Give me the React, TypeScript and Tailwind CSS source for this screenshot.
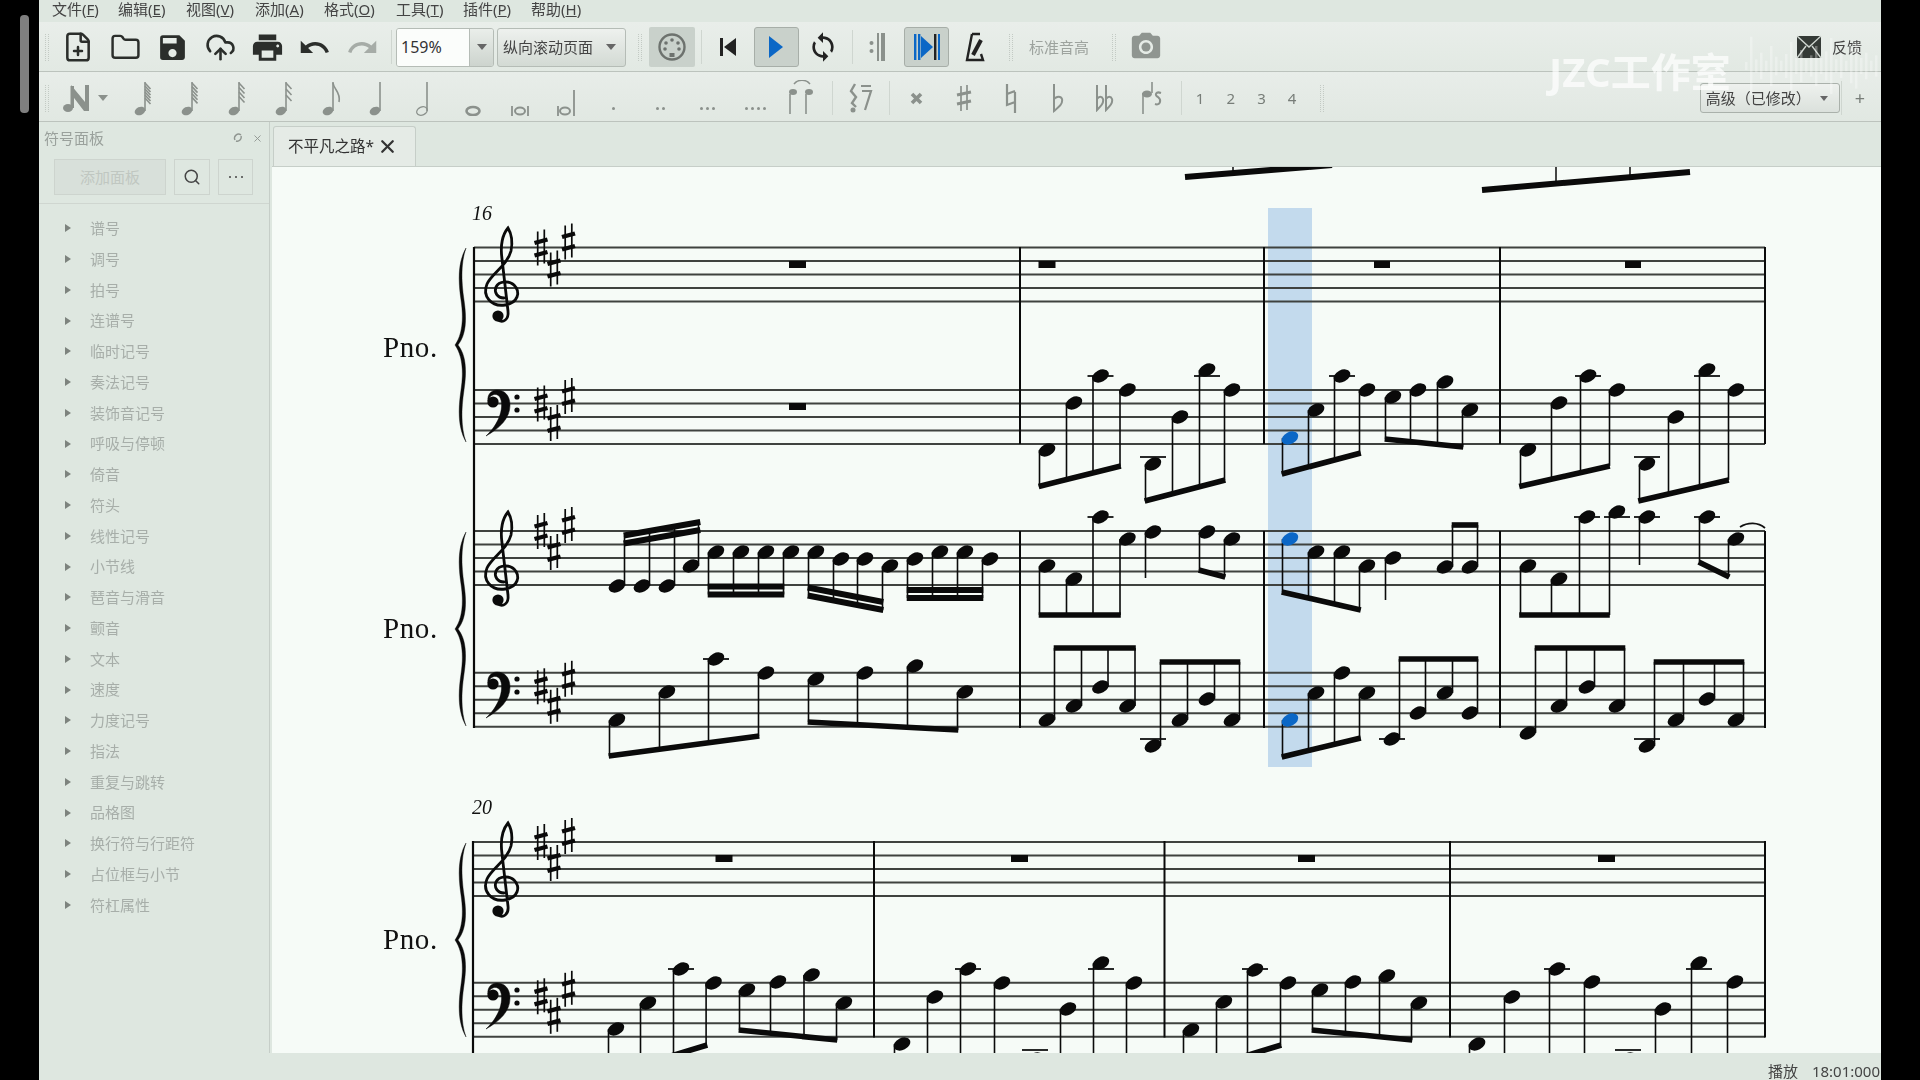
import { Fragment } from "react";
import type { ReactNode } from "react";
import { FilePlus, Folder, CloudUpload, Search, X } from "lucide-react";
import { MdSave, MdPrint, MdUndo, MdRedo, MdSync, MdPhotoCamera } from "react-icons/md";

type Head = [number, number, boolean?];
type Group = { h: Head[]; d: "u" | "d"; b: [number, number, number, number]; b2?: number };

const BLUE = "#0b67c6";
const Nh = ({ x, y, c }: { x: number; y: number; c?: boolean }) => (
  <ellipse cx={x} cy={y} rx={8.8} ry={6} transform={`rotate(-27 ${x} ${y})`} fill={c ? BLUE : "#0a0a0a"} />
);

const groups: Group[] = [
  // system 1, staff 2
  { h: [[1047, 450], [1074, 403], [1100.5, 376], [1127.5, 390]], d: "d", b: [1039.5, 486.5, 1120, 466] },
  { h: [[1153, 464], [1180, 417], [1207, 370], [1232, 390]], d: "d", b: [1145.5, 501, 1224.5, 480] },
  { h: [[1290, 438, true], [1316, 410], [1342, 376], [1367, 390]], d: "d", b: [1282.5, 474, 1360, 453] },
  { h: [[1393, 397], [1418, 390], [1445, 382], [1470, 410]], d: "d", b: [1385.5, 439, 1462.5, 447] },
  { h: [[1528, 450], [1559, 403], [1588, 376], [1617, 390]], d: "d", b: [1520, 486.5, 1609, 466] },
  { h: [[1647, 464], [1676, 417], [1707, 370], [1736, 390]], d: "d", b: [1639, 501, 1728, 480] },
  // system 1b, staff 1, measure 1
  { h: [[617, 586], [642, 586], [667, 586], [691, 566]], d: "u", b: [624.5, 535.5, 699.5, 522], b2: 8 },
  { h: [[716, 552], [741, 552], [766, 552], [791, 552]], d: "d", b: [708.5, 594.5, 783.5, 594.5], b2: -8 },
  { h: [[816, 552], [841, 559], [865, 559], [890, 566]], d: "d", b: [808.5, 595.5, 882.5, 610], b2: -8 },
  { h: [[915, 559], [940, 552], [965, 552], [990, 559]], d: "d", b: [907.5, 598, 982.5, 598], b2: -8 },
  // measure 2
  { h: [[1047, 566], [1074, 579], [1100.5, 517], [1127.5, 539]], d: "d", b: [1039.5, 615, 1120, 615] },
  { h: [[1207, 532], [1232, 539]], d: "d", b: [1199.5, 570, 1224.5, 577] },
  { h: [[1290, 539, true], [1316, 552], [1342, 552], [1367, 566]], d: "d", b: [1282.5, 592, 1360, 610] },
  { h: [[1445, 567], [1470, 567]], d: "u", b: [1452.5, 525, 1477.5, 525] },
  { h: [[1528, 566], [1559, 579], [1587, 517], [1617, 512]], d: "d", b: [1520, 615, 1609, 615] },
  { h: [[1707, 517], [1736, 539]], d: "d", b: [1699.5, 562, 1728.5, 577] },
  // staff 2, lower
  { h: [[617, 720], [667, 692], [716, 659], [766, 673]], d: "d", b: [609.5, 756, 758.5, 736] },
  { h: [[816, 679], [865, 673], [915, 666], [965, 692]], d: "d", b: [808.5, 722, 957.5, 730] },
  { h: [[1047, 720], [1074, 706], [1100.5, 687], [1127.5, 706]], d: "u", b: [1054.5, 648, 1135, 648] },
  { h: [[1153, 746], [1180, 720], [1207, 699], [1232, 720]], d: "u", b: [1160.5, 662, 1239.5, 662] },
  { h: [[1290, 720, true], [1316, 693], [1342, 673], [1367, 693]], d: "d", b: [1282.5, 757, 1360, 738] },
  { h: [[1392, 739], [1418, 713], [1445, 693], [1470, 713]], d: "u", b: [1399.5, 659, 1477.5, 659] },
  { h: [[1528, 733], [1559, 706], [1587, 687], [1617, 706]], d: "u", b: [1535.5, 648, 1624.5, 648] },
  { h: [[1647, 746], [1676, 720], [1707, 699], [1736, 720]], d: "u", b: [1654.5, 662, 1743.5, 662] },
  // system 2
  { h: [[616, 1029], [648, 1003], [681, 969], [713.6, 983]], d: "d", b: [609, 1075, 706.5, 1045] },
  { h: [[747, 990], [778, 982], [811.5, 975], [844, 1003]], d: "d", b: [739.5, 1030, 836.5, 1040] },
  { h: [[902, 1044], [935, 997], [968, 969], [1002, 983]], d: "d", b: [894.5, 1095, 994.5, 1075] },
  { h: [[1068, 1009], [1101, 963], [1134, 983]], d: "d", b: [1060.5, 1095, 1126.5, 1085] },
  { h: [[1191, 1030], [1224, 1002], [1255, 970], [1288, 983]], d: "d", b: [1183.5, 1075, 1280.5, 1045] },
  { h: [[1320, 990], [1353, 982], [1387, 976], [1419, 1003]], d: "d", b: [1312.5, 1030, 1411.5, 1040] },
  { h: [[1477, 1044], [1512, 997], [1557, 969], [1592, 982]], d: "d", b: [1469.5, 1095, 1584.5, 1075] },
  { h: [[1663, 1009], [1699, 963], [1735, 982]], d: "d", b: [1655.5, 1095, 1727.5, 1085] },
];

const singles: [number, number, number, "d" | "u"][] = [
  [1153, 532, 578, "d"],
  [1393, 558, 600, "d"],
  [1647, 517, 565, "d"],
  [1035, 1059, 1090, "d"],
  [1628, 1059, 1090, "d"],
];

const ledgers: [number, number][] = [
  [1100.5, 376], [1207, 376], [1153, 457], [1342, 376], [1588, 376], [1707, 376], [1647, 457],
  [1100.5, 517], [1587, 517], [1617, 517], [1647, 517], [1707, 517],
  [1153, 739], [1392, 739], [1647, 739], [716, 659],
  [681, 969], [968, 969], [1101, 969], [1255, 969], [1557, 969], [1699, 969], [1035, 1050], [1628, 1050],
];

const rests: [number, number, number][] = [
  [789, 261, 17], [789, 403, 17], [1038.5, 261, 17], [1374, 261, 16], [1625, 261, 16],
  [715.5, 855, 17], [1011, 855, 17], [1298, 855, 17], [1598, 855, 17],
];

const Staff = ({ x1, x2, y }: { x1: number; x2: number; y: number }) => (
  <g stroke="#3f423f" strokeWidth={2}>
    {[0, 1, 2, 3, 4].map((i) => (
      <line key={i} x1={x1} x2={x2} y1={y + i * 13.5} y2={y + i * 13.5} />
    ))}
  </g>
);

const Treble = ({ x, y }: { x: number; y: number }) => (
  <g transform={`translate(${x} ${y})`}>
    <path
      d="M19 51 C12 51 9 45 11 40 C14 34 24 33 29 38 C36 45 33 56 20 58 C6 60 -3 49 2 37 C7 26 22 19 26 4 C28 -6 26 -14 23 -19 C18 -13 15 -3 17 12 L23 64 C24 73 18 76 13 73"
      fill="none"
      stroke="#0a0a0a"
      strokeWidth={2.8}
      strokeLinecap="round"
    />
    <circle cx={13} cy={69} r={5.6} fill="#0a0a0a" />
  </g>
);

const Bass = ({ x, y }: { x: number; y: number }) => (
  <g transform={`translate(${x} ${y})`}>
    <path
      d="M0 44 C14 36 24 26 24 13 C24 3 18 -2 11 -2 C5 -2 1 3 2 9 C4 2 10 1 13 4 C18 10 17 28 0 44 Z"
      fill="#0a0a0a"
      stroke="#0a0a0a"
      strokeWidth={0.5}
    />
    <circle cx={7} cy={10} r={5.6} fill="#0a0a0a" />
    <circle cx={31} cy={5} r={2.6} fill="#0a0a0a" />
    <circle cx={31} cy={18} r={2.6} fill="#0a0a0a" />
  </g>
);

const Sharp = ({ x, y }: { x: number; y: number }) => (
  <g transform={`translate(${x} ${y})`}>
    <line x1={-3.3} x2={-3.3} y1={-16} y2={18} stroke="#0a0a0a" strokeWidth={1.7} />
    <line x1={3.3} x2={3.3} y1={-18} y2={16} stroke="#0a0a0a" strokeWidth={1.7} />
    <line x1={-6.5} x2={6.5} y1={-4.5} y2={-8} stroke="#0a0a0a" strokeWidth={4.4} />
    <line x1={-6.5} x2={6.5} y1={8} y2={4.5} stroke="#0a0a0a" strokeWidth={4.4} />
  </g>
);

const Brace = ({ y }: { y: number }) => (
  <path
    transform={`translate(0 ${y - 248})`}
    d="M466 248 C458 262 458 280 461 300 C464 320 462 335 455 345 C462 355 464 370 461 390 C458 410 458 428 466 442 C461 428 461 410 464 390 C467 370 466 355 458 345 C466 335 467 320 464 300 C461 280 461 262 466 248 Z"
    fill="#0a0a0a"
    stroke="#0a0a0a"
    strokeWidth={0.4}
  />
);

const Key = ({ x, y, bass }: { x: number; y: number; bass?: boolean }) =>
  bass ? (
    <>
      <Sharp x={x} y={y + 13.5} />
      <Sharp x={x + 13} y={y + 33} />
      <Sharp x={x + 27.5} y={y + 6} />
    </>
  ) : (
    <>
      <Sharp x={x} y={y} />
      <Sharp x={x + 13} y={y + 21} />
      <Sharp x={x + 27.5} y={y - 6} />
    </>
  );

const Pno = ({ y }: { y: number }) => (
  <text x={383} y={y} fontSize={29} letterSpacing={0.6} className="font-['Liberation_Serif',serif]" fill="#111">Pno.</text>
);

function Score() {
  return (
    <svg viewBox="272 167 1609 886" width={1609} height={886} className="block">
      <rect x={1268} y={208} width={44} height={559} fill="#c3daed" />
      {/* beams running in from the system above */}
      <g stroke="#0a0a0a">
        <line x1={1185} y1={177} x2={1332} y2={165} strokeWidth={6} />
        <line x1={1482} y1={190} x2={1690} y2={172} strokeWidth={6} />
        {[1233, 1281, 1556, 1630].map((x) => (
          <line key={x} x1={x} x2={x} y1={165} y2={x < 1400 ? 172 : x < 1600 ? 183 : 176} strokeWidth={1.5} />
        ))}
      </g>
      {[247.5, 390, 531, 672.8].map((y) => (
        <Staff key={y} x1={474} x2={1765} y={y} />
      ))}
      {[842, 982.8].map((y) => (
        <Staff key={y} x1={473} x2={1765} y={y} />
      ))}
      <line x1={474} x2={474} y1={247} y2={728} stroke="#0a0a0a" strokeWidth={2.2} />
      <line x1={473} x2={473} y1={841} y2={1060} stroke="#0a0a0a" strokeWidth={2.2} />
      {[1020, 1264, 1500, 1765].flatMap((x) =>
        [
          [247, 444],
          [531, 728],
        ].map(([a, b]) => <line key={`${x}${a}`} x1={x} x2={x} y1={a} y2={b} stroke="#0a0a0a" strokeWidth={2} />),
      )}
      {[874, 1164.5, 1450, 1765].map((x) => (
        <line key={x} x1={x} x2={x} y1={841} y2={1037.5} stroke="#0a0a0a" strokeWidth={2} />
      ))}
      <Brace y={248} />
      <Brace y={532} />
      <Brace y={843} />
      <Pno y={357} />
      <Pno y={638} />
      <Pno y={949} />
      <text x={472} y={220} fontSize={20} fontStyle="italic" className="font-['Liberation_Serif',serif]" fill="#111">16</text>
      <text x={472} y={814} fontSize={20} fontStyle="italic" className="font-['Liberation_Serif',serif]" fill="#111">20</text>
      <Treble x={485} y={247} />
      <Treble x={485} y={531} />
      <Treble x={485} y={842} />
      <Bass x={486} y={392} />
      <Bass x={486} y={674} />
      <Bass x={486} y={985} />
      <Key x={541} y={247.5} />
      <Key x={541} y={531} />
      <Key x={541} y={842} />
      <Key x={541} y={390} bass />
      <Key x={541} y={672.8} bass />
      <Key x={541} y={982.8} bass />
      {rests.map(([x, y, w]) => (
        <rect key={`${x}${y}`} x={x} y={y} width={w} height={7} fill="#0a0a0a" />
      ))}
      {ledgers.map(([x, y]) => (
        <line key={`${x}${y}`} x1={x - 13} x2={x + 13} y1={y} y2={y} stroke="#111" strokeWidth={1.8} />
      ))}
      {groups.map((g, i) => {
        const [x1, y1, x2, y2] = g.b;
        return (
          <Fragment key={i}>
            {g.h.map(([x, y, c], j) => {
              const sx = g.d === "d" ? x - 7.5 : x + 7.5;
              const sy = y1 + ((sx - x1) / (x2 - x1)) * (y2 - y1);
              return (
                <Fragment key={j}>
                  <line x1={sx} x2={sx} y1={y} y2={sy} stroke="#0a0a0a" strokeWidth={1.6} />
                  <Nh x={x} y={y} c={c} />
                </Fragment>
              );
            })}
            <line x1={x1 - 0.8} x2={x2 + 0.8} y1={y1} y2={y2} stroke="#0a0a0a" strokeWidth={g.b2 ? 6 : 5.6} />
            {g.b2 ? <line x1={x1 - 0.8} x2={x2 + 0.8} y1={y1 + g.b2} y2={y2 + g.b2} stroke="#0a0a0a" strokeWidth={6} /> : null}
          </Fragment>
        );
      })}
      {singles.map(([x, y, e, d]) => (
        <Fragment key={`${x}${y}`}>
          <line x1={d === "d" ? x - 7.5 : x + 7.5} x2={d === "d" ? x - 7.5 : x + 7.5} y1={y} y2={e} stroke="#0a0a0a" strokeWidth={1.6} />
          <Nh x={x} y={y} />
        </Fragment>
      ))}
      <path d="M1740 527 C1748 522 1758 522 1765 528" fill="none" stroke="#111" strokeWidth={1.8} />
    </svg>
  );
}

const G = "#8b918c";
const Box = ({ children, w = 26, h = 36 }: { children: ReactNode; w?: number; h?: number }) => (
  <svg width={w} height={h} viewBox={`0 0 ${w} ${h}`} fill="none">{children}</svg>
);

const NoteIcon = ({ flags, hollow, noStem }: { flags: number; hollow?: boolean; noStem?: boolean }) => (
  <Box>
    <ellipse cx={10} cy={31} rx={5.5} ry={4} transform="rotate(-25 10 31)" fill={hollow ? "none" : G} stroke={G} strokeWidth={hollow ? 1.3 : 0} />
    {!noStem && <line x1={15} x2={15} y1={31} y2={2} stroke={G} strokeWidth={1.6} />}
    {flags === 1 && <path d="M15 3 C16 10 23 12 21 22" stroke={G} strokeWidth={1.6} />}
    {flags > 1 && Array.from({ length: flags + 1 }).map((_, i) => (
      <line key={i} x1={15} y1={3 + i * (18 / (flags + 1))} x2={20.5} y2={9 + i * (18 / (flags + 1))} stroke={G} strokeWidth={1.6} />
    ))}
  </Box>
);

const Grip = ({ className }: { className: string }) => (
  <div className={`w-[4px] h-[27px] border-x border-dotted border-[#c3cac4] shrink-0 ${className}`} />
);
const Sep = ({ className }: { className: string }) => <div className={`w-px h-[34px] bg-[#cfd6d0] shrink-0 ${className}`} />;
const Cell = ({ children, className = "w-[47.4px]" }: { children: ReactNode; className?: string }) => (
  <div className={`flex items-center justify-center shrink-0 h-full ${className}`}>{children}</div>
);

const Dots = ({ n }: { n: number }) => (
  <div className="flex gap-[3px] self-end mb-[11px]">
    {Array.from({ length: n }).map((_, i) => (
      <div key={i} className="w-[3px] h-[3px] rounded-full bg-[#8b918c]" />
    ))}
  </div>
);

const menus: [string, string, string][] = [
  ["文件", "F", "w-[66px]"],
  ["编辑", "E", "w-[68px]"],
  ["视图", "V", "w-[69px]"],
  ["添加", "A", "w-[69px]"],
  ["格式", "O", "w-[72px]"],
  ["工具", "T", "w-[67px]"],
  ["插件", "P", "w-[68px]"],
  ["帮助", "H", "w-[70px]"],
];

const palettes = [
  "谱号", "调号", "拍号", "连谱号", "临时记号", "奏法记号", "装饰音记号", "呼吸与停顿", "倚音", "符头", "线性记号", "小节线",
  "琶音与滑音", "颤音", "文本", "速度", "力度记号", "指法", "重复与跳转", "品格图", "换行符与行距符", "占位框与小节", "符杠属性",
];

const wave = [6, 44, 10, 20, 8, 30, 14, 8, 18, 36, 12, 24, 10, 16, 30, 12, 22, 42, 10, 18, 8, 26, 34, 12, 20, 8, 16];

function Toolbar1() {
  return (
    <div className="h-[50px] pt-[1px] flex items-center border-b border-[#bcc3bd] bg-linear-to-b from-[#e9eeea] to-[#e2e9e3] shrink-0">
      <Grip className="ml-[6px]" />
      <div className="ml-[5.3px] flex h-full text-[#2b2e2b]">
        <Cell><FilePlus size={32} strokeWidth={1.9} /></Cell>
        <Cell><Folder size={31} strokeWidth={1.9} /></Cell>
        <Cell><MdSave size={33} /></Cell>
        <Cell><CloudUpload size={31} strokeWidth={2} /></Cell>
        <Cell><MdPrint size={35} /></Cell>
        <Cell><MdUndo size={33} /></Cell>
        <Cell><MdRedo size={33} className="text-[#a6aca7]" /></Cell>
      </div>
      <Sep className="ml-[5px]" />
      <div className="ml-[4px] w-[98px] h-[39px] flex rounded-[3px] border border-[#b5bcb6] overflow-hidden">
        <div className="w-[72px] bg-[#fbfdfb] flex items-center pl-[4px] text-[16px] text-[#333]">159%</div>
        <div className="flex-1 border-l border-[#b5bcb6] flex items-center justify-center bg-linear-to-b from-[#eaeeea] to-[#cdd4ce]">
          <div className="border-x-[5px] border-x-transparent border-t-[6px] border-t-[#666]" />
        </div>
      </div>
      <div className="ml-[3px] w-[129px] h-[39px] flex items-center justify-between pl-[5px] pr-[9px] rounded-[3px] border border-[#b5bcb6] bg-linear-to-b from-[#eef1ee] to-[#d3dad4] text-[15px] text-[#444]">
        <span>纵向滚动页面</span>
        <div className="border-x-[5px] border-x-transparent border-t-[6px] border-t-[#666]" />
      </div>
      <Grip className="ml-[12px]" />
      <div className="ml-[7px] w-[46px] h-[40px] rounded-[2px] bg-[#c9d1cb] flex items-center justify-center">
        <svg width="30" height="30" viewBox="0 0 30 30" fill="none">
          <circle cx="15" cy="15" r="12.5" stroke="#6d726e" strokeWidth="2.4" />
          <circle cx="15" cy="8" r="1.8" fill="#6d726e" />
          <circle cx="9" cy="11" r="1.8" fill="#6d726e" />
          <circle cx="21" cy="11" r="1.8" fill="#6d726e" />
          <circle cx="8" cy="17" r="1.8" fill="#6d726e" />
          <circle cx="22" cy="17" r="1.8" fill="#6d726e" />
          <rect x="12.5" y="21" width="5" height="4" fill="#6d726e" />
        </svg>
      </div>
      <Sep className="ml-[5.5px]" />
      <Cell className="ml-[2px] w-[49px]">
        <svg width="18" height="20" viewBox="0 0 18 20"><rect x="1" y="1" width="3" height="18" fill="#222" /><path d="M17 1 V19 L5 10 Z" fill="#222" /></svg>
      </Cell>
      <div className="ml-[1px] w-[45px] h-[40px] rounded-[3px] border border-[#a7aea8] bg-[#c9d1cb] flex items-center justify-center">
        <svg width="16" height="24" viewBox="0 0 16 24"><path d="M1 1 L15 12 L1 23 Z" fill="#0b67c6" /></svg>
      </div>
      <Cell className="w-[49px]"><MdSync size={32} className="text-[#222]" /></Cell>
      <Sep className="ml-[4px]" />
      <Cell className="w-[51px]">
        <svg width="18" height="28" viewBox="0 0 18 28"><circle cx="2.5" cy="10" r="2" fill="#8b918c" /><circle cx="2.5" cy="18" r="2" fill="#8b918c" /><rect x="8" y="0" width="2" height="28" fill="#8b918c" /><rect x="12" y="0" width="4" height="28" fill="#8b918c" /></svg>
      </Cell>
      <div className="ml-[0.5px] w-[45px] h-[40px] rounded-[3px] border border-[#a7aea8] bg-[#c9d1cb] flex items-center justify-center">
        <svg width="26" height="30" viewBox="0 0 26 30"><rect x="0" y="2" width="2.4" height="26" fill="#0b67c6" /><rect x="4" y="2" width="2.4" height="26" fill="#0b67c6" /><path d="M7 4 L19 15 L7 26 Z" fill="#0b67c6" /><rect x="20" y="2" width="2.4" height="26" fill="#222" /><rect x="24" y="2" width="2" height="26" fill="#0b67c6" /></svg>
      </div>
      <Cell className="w-[52px]">
        <svg width="20" height="30" viewBox="0 0 20 30" fill="none"><path d="M7 2 H15 M7 2 L2 28 H18 L16 22" stroke="#222" strokeWidth="2.4" /><path d="M8 23 L16 8" stroke="#222" strokeWidth="4" /></svg>
      </Cell>
      <Grip className="ml-[8px]" />
      <div className="ml-[16px] w-[62px] text-[15px] text-[#9da39e] whitespace-nowrap">标准音高</div>
      <Grip className="ml-[21px]" />
      <Cell className="w-[60px]"><MdPhotoCamera size={34} className="text-[#8f9590]" /></Cell>
      <div className="flex-1" />
      <svg width="26" height="24" viewBox="0 0 26 24" className="mr-[10px]">
        <rect x="1" y="1" width="24" height="22" fill="#343a36" />
        <path d="M1 1 L13 12 L25 1 M1 23 L10 11 M25 23 L16 11" stroke="#cfd6d0" strokeWidth="1.4" fill="none" />
      </svg>
      <span className="text-[15px] text-[#444] mr-[19px]">反馈</span>
    </div>
  );
}

function Toolbar2() {
  return (
    <div className="h-[50px] pt-[3px] flex items-center border-b border-[#bcc3bd] bg-linear-to-b from-[#e8ede9] to-[#e1e8e2] text-[#8b918c] shrink-0">
      <Grip className="ml-[6px]" />
      <div className="ml-[5.3px] w-[65px] flex items-center h-full pl-[9px] gap-[9px]">
        <svg width="26" height="30" viewBox="0 0 26 30"><ellipse cx="5" cy="25" rx="5" ry="4" fill="#8b918c" /><rect x="7.5" y="3" width="3.5" height="22" fill="#8b918c" /><path d="M8 2 L22 19 V2 H26 V28 H21 L8 11 Z" fill="#8b918c" /></svg>
        <div className="border-x-[5.5px] border-x-transparent border-t-[6px] border-t-[#8b918c]" />
      </div>
      <div className="flex h-full">
        {[5, 4, 3, 2, 1, 0].map((f) => (
          <Cell key={f} className="w-[47.1px]"><NoteIcon flags={f} /></Cell>
        ))}
        <Cell className="w-[47.1px]"><NoteIcon flags={0} hollow /></Cell>
        <Cell className="w-[47.1px]">
          <svg width="20" height="36" viewBox="0 0 20 36"><ellipse cx="10" cy="31" rx="6.5" ry="4" stroke="#8b918c" strokeWidth="2.6" fill="none" /></svg>
        </Cell>
        <Cell className="w-[47.1px]">
          <svg width="22" height="36" viewBox="0 0 22 36" fill="none"><ellipse cx="11" cy="31" rx="5" ry="3.5" stroke="#8b918c" strokeWidth="2" /><path d="M3 26 V36 M19 26 V36" stroke="#8b918c" strokeWidth="1.8" /></svg>
        </Cell>
        <Cell className="w-[47.1px]">
          <svg width="22" height="36" viewBox="0 0 22 36" fill="none"><ellipse cx="9" cy="31" rx="5" ry="3.5" stroke="#8b918c" strokeWidth="2" /><path d="M2 26 V36 M18 10 V36" stroke="#8b918c" strokeWidth="1.8" /></svg>
        </Cell>
        <Cell className="w-[47.1px]"><Dots n={1} /></Cell>
        <Cell className="w-[47.1px]"><Dots n={2} /></Cell>
        <Cell className="w-[47.1px]"><Dots n={3} /></Cell>
        <Cell className="w-[47.1px]"><Dots n={4} /></Cell>
        <Cell className="w-[47.1px]">
          <svg width="30" height="36" viewBox="0 0 30 36" fill="none">
            <path d="M7 4 C11 -1 19 -1 23 4" stroke="#8b918c" strokeWidth="1.5" />
            <path d="M3 34 V14 M19 34 V14" stroke="#8b918c" strokeWidth="1.6" />
            <ellipse cx="6" cy="12" rx="4" ry="3" fill="#8b918c" /><ellipse cx="22" cy="12" rx="4" ry="3" fill="#8b918c" />
          </svg>
        </Cell>
      </div>
      <Sep className="ml-[6px]" />
      <Cell className="w-[56px]">
        <svg width="24" height="32" viewBox="0 0 24 32" fill="none"><path d="M6 2 L2 9 L7 15 L3 21 L7 25" stroke="#8b918c" strokeWidth="2.4" /><path d="M12 4 H22 M13 9 H22 L16 28" stroke="#8b918c" strokeWidth="2.2" /><circle cx="4" cy="28" r="2.5" fill="#8b918c" /></svg>
      </Cell>
      <Sep className="" />
      <Cell className="ml-[3.5px] w-[47px]">
        <svg width="13" height="13" viewBox="0 0 13 13"><path d="M2 2 L11 11 M11 2 L2 11" stroke="#8b918c" strokeWidth="3.6" /></svg>
      </Cell>
      <Cell className="w-[47px]">
        <svg width="16" height="28" viewBox="0 0 16 28"><path d="M5 2 V27 M11 1 V26" stroke="#8b918c" strokeWidth="1.7" /><path d="M1 11 L15 8 M1 20 L15 17" stroke="#8b918c" strokeWidth="3" /></svg>
      </Cell>
      <Cell className="w-[47px]">
        <svg width="12" height="30" viewBox="0 0 12 30" fill="none"><path d="M2 1 V22 L10 19 M10 9 V30 M2 11 L10 8" stroke="#8b918c" strokeWidth="2.2" /></svg>
      </Cell>
      <Cell className="w-[47px]">
        <svg width="14" height="30" viewBox="0 0 14 30" fill="none"><path d="M3 1 V28 C8 24 12 21 11 16 C10 13 6 13 3 16" stroke="#8b918c" strokeWidth="2" /></svg>
      </Cell>
      <Cell className="w-[47px]">
        <svg width="20" height="28" viewBox="0 0 20 28" fill="none"><path d="M2 1 V26 C6 22 9 19 8 15 C7 12 4 12 2 15 M11 1 V26 C15 22 18 19 17 15 C16 12 13 12 11 15" stroke="#8b918c" strokeWidth="2" /></svg>
      </Cell>
      <Cell className="w-[47px]">
        <svg width="22" height="34" viewBox="0 0 22 34" fill="none"><path d="M2 33 V12 M11 1 V12" stroke="#8b918c" strokeWidth="1.6" /><ellipse cx="6" cy="13" rx="5" ry="3.5" fill="#8b918c" /><path d="M20 12 C15 10 13 14 17 16 C21 19 19 25 14 23" stroke="#8b918c" strokeWidth="2" /></svg>
      </Cell>
      <Sep className="ml-[6px]" />
      <div className="ml-[2.5px] flex h-full text-[15px] text-[#777d78]">
        {["1", "2", "3", "4"].map((n) => (
          <Cell key={n} className="w-[30.7px]">{n}</Cell>
        ))}
      </div>
      <Grip className="ml-[13px]" />
      <div className="flex-1" />
      <div className="w-[140px] h-[30px] flex items-center justify-between pl-[5px] pr-[11px] rounded-[3px] border border-[#aab1ab] bg-linear-to-b from-[#eef1ee] to-[#dbe1dc] text-[15px] text-[#444]">
        <span className="whitespace-nowrap">高级（已修改）</span>
        <div className="border-x-[4px] border-x-transparent border-t-[5px] border-t-[#666]" />
      </div>
      <Sep className="ml-[1px] h-[26px]" />
      <span className="ml-[13px] mr-[16px] text-[18px] text-[#777d78] leading-none">+</span>
    </div>
  );
}

export default function App() {
  return (
    <div className="relative w-[1920px] h-[1080px] bg-black overflow-hidden flex font-['Noto_Sans','Noto_Sans_CJK_SC',sans-serif]">
      <div className="w-[39px] shrink-0 pt-[15px] pl-[20px]">
        <div className="w-[9px] h-[98px] rounded-[4px] bg-[#7f7f7f]" />
      </div>
      <div className="w-[1842px] shrink-0 flex flex-col bg-[#dee7e0] blur-[0.5px]">
        <div className="h-[22px] pb-[4px] shrink-0 flex items-center pl-[13px] text-[15px] text-[#444] leading-none">
          {menus.map(([t, k, w]) => (
            <div key={k} className={`${w} whitespace-nowrap`}>
              {t}(<span className="underline">{k}</span>)
            </div>
          ))}
        </div>
        <Toolbar1 />
        <Toolbar2 />
        <div className="flex-1 flex min-h-0">
          <div className="w-[231px] shrink-0 border-r border-[#c6cec8] flex flex-col">
            <div className="h-[37px] pb-[5px] shrink-0 flex items-center pl-[5px] pr-[6px] text-[15px] text-[#9aa19c]">
              <span className="flex-1">符号面板</span>
              <svg width="10" height="10" viewBox="0 0 10 10" fill="none" className="mr-[9px]"><path d="M2 7 A4 4 0 0 1 8 2 M8 3 A4 4 0 0 1 3 8" stroke="#8f9590" strokeWidth="1.4" /></svg>
              <X size={11} strokeWidth={2} className="text-[#8f9590]" />
            </div>
            <div className="flex items-center h-[36px] shrink-0 pl-[15px] gap-[8px]">
              <div className="w-[112px] h-full border border-[#cdd4ce] bg-[#d8e0da] flex items-center justify-center text-[15px] text-[#c0c7c1]">添加面板</div>
              <div className="w-[36px] h-full border border-[#cdd4ce] flex items-center justify-center text-[#444]"><Search size={18} strokeWidth={2} /></div>
              <div className="w-[35px] h-full border border-[#cdd4ce] flex items-center justify-center gap-[4px]">
                <i className="w-[2px] h-[2px] rounded-full bg-[#444]" /><i className="w-[2px] h-[2px] rounded-full bg-[#444]" /><i className="w-[2px] h-[2px] rounded-full bg-[#444]" />
              </div>
            </div>
            <div className="mt-[8px] h-px bg-[#cfd6d0] shrink-0" />
            <div className="pt-[9px] flex flex-col">
              {palettes.map((p) => (
                <div key={p} className="h-[30.75px] shrink-0 flex items-center pl-[26px] text-[15px] text-[#a7aea9]">
                  <div className="w-[25px] shrink-0">
                    <div className="w-0 h-0 border-y-[4px] border-y-transparent border-l-[6px] border-l-[#7d837e]" />
                  </div>
                  <span className="whitespace-nowrap">{p}</span>
                </div>
              ))}
            </div>
          </div>
          <div className="flex-1 flex flex-col min-w-0 pl-[2px]">
            <div className="h-[45px] shrink-0 flex items-end border-b border-[#c6cec8]">
              <div className="ml-px w-[143px] h-[40px] rounded-t-[3px] border border-b-0 border-[#c6cec8] bg-[#e5ebe6] flex items-center pl-[14px] text-[15.5px] text-[#333] whitespace-nowrap">
                不平凡之路*
                <X size={21} strokeWidth={2.6} className="ml-[3px] text-[#333]" />
              </div>
            </div>
            <div className="flex-1 min-h-0 bg-[#f6fbf7] overflow-hidden">
              <Score />
            </div>
          </div>
        </div>
        <div className="h-[27px] pt-[9px] shrink-0 flex items-center justify-end text-[15px] text-[#444] pr-px">
          <span className="mr-[14px]">播放</span>
          <span>18:01:000</span>
        </div>
      </div>
      <div className="flex-1" />
      {/* video watermark */}
      <div className="absolute left-[1549px] top-[47px] text-[40px] font-bold leading-[50px] text-white/70 whitespace-nowrap">JZC工作室</div>
      <svg className="absolute left-[1745px] top-[36px]" width="136" height="60" viewBox="0 0 136 60">
        {wave.map((h, i) => (
          <rect key={i} x={i * 5} y={30 - h / 1.5} width={2.5} height={(h * 2) / 1.5} fill="#ffffff" fillOpacity={0.3} />
        ))}
      </svg>
    </div>
  );
}
